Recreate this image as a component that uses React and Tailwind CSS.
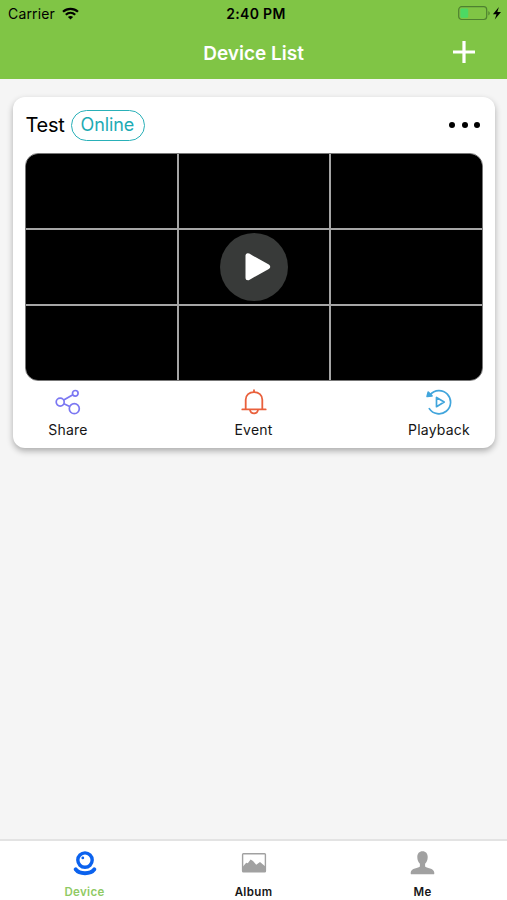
import React from "react";

function StatusBar() {
  return (
    <div className="relative flex h-7 items-center justify-between pl-[8px] pr-[5px] text-black">
      <div className="flex items-center gap-[7px]">
        <span className="text-[14px] leading-7 tracking-[0.15px]">Carrier</span>
        <svg width="17" height="13" viewBox="0 0 17 13" fill="none" stroke="#000" strokeWidth="2.2" className="-mt-[2px]">
          <path d="M1 4.8C5.2.8 11.8.8 16 4.8" />
          <path d="M3.8 7.7C6.5 5.2 10.5 5.2 13.2 7.7" />
          <path d="M8.5 12.6 5.9 9.9C7.4 8.6 9.6 8.6 11.1 9.9Z" fill="#000" stroke="none" />
        </svg>
      </div>
      <span className="absolute inset-x-0 pl-[5px] text-center text-[14px] font-semibold leading-7 tracking-[0.3px]">
        2:40 PM
      </span>
      <svg width="44" height="16" viewBox="0 0 44 16" fill="none">
        <rect x="0.7" y="0.7" width="28" height="12.8" rx="3" stroke="#4e8130" strokeWidth="1.2" />
        <rect x="2.4" y="2.5" width="7.8" height="9.2" rx="1.3" fill="#4cd964" />
        <path d="M30.4 4.9C32.2 5.7 32.2 8.5 30.4 9.4Z" fill="#4e8130" />
        <path d="M40.9 1 34.9 8.2H38.5L36.8 13.4 43 6.1H39.3Z" fill="#000" />
      </svg>
    </div>
  );
}

function ShareIcon() {
  return (
    <svg width="26" height="26" viewBox="0 0 26 26" fill="none" stroke="#7b77f2" strokeWidth="1.7">
      <circle cx="5.2" cy="13.1" r="4" />
      <circle cx="20.3" cy="4.3" r="2.8" />
      <circle cx="19.3" cy="19.7" r="5" />
      <path d="M8.7 11.1 17.9 5.7M8.9 14.7 14.7 17.4" />
    </svg>
  );
}

function BellIcon() {
  return (
    <svg width="26" height="26" viewBox="0 0 26 26" fill="none" stroke="#e9603c" strokeWidth="1.8">
      <path d="M4.7 20.3V10.8C4.7 6.1 8.3 3.1 13 3.1S21.3 6.1 21.3 10.8V20.3" />
      <path d="M1.3 20.4H24.7M13 1.2V3.2" strokeLinecap="round" />
      <path d="M9 20.8C9.4 23.2 10.9 24.3 13 24.3S16.6 23.2 17 20.8" />
    </svg>
  );
}

function PlaybackIcon() {
  return (
    <svg width="26" height="26" viewBox="0 0 26 26" fill="none" stroke="#41a5dc" strokeWidth="1.7" strokeLinejoin="round">
      <path d="M4.2 5.6A11.6 11.6 0 1 1 3.3 19.6" strokeLinecap="round" />
      <path d="M2.2 3.2 1.1 7.4 6 6.9Z" fill="#41a5dc" />
      <path d="M10.5 8.5V17.7L18.2 13.1Z" />
    </svg>
  );
}

function Action({ icon, label }) {
  return (
    <div className="flex w-[90px] flex-col items-center">
      {icon}
      <span className="mt-[5px] text-[14px] leading-5 tracking-[0.22px] text-[#151515]">{label}</span>
    </div>
  );
}

function VideoPreview() {
  return (
    <div className="relative mx-[12px] h-[228px] overflow-hidden rounded-[13px] border border-[#777] bg-black">
      <div className="grid h-full grid-cols-3 grid-rows-3 gap-[2px] bg-[#a5a5a5]">
        {Array.from({ length: 9 }, (_, i) => (
          <div key={i} className="bg-black" />
        ))}
      </div>
      <div className="absolute left-1/2 top-1/2 flex size-[68px] -translate-x-1/2 -translate-y-1/2 items-center justify-center rounded-full bg-[#383a39]">
        <svg width="68" height="68" viewBox="0 0 68 68" fill="#fff" stroke="#fff" strokeWidth="5" strokeLinejoin="round">
          <path d="M28 22.8V44.7L47.6 33.8Z" />
        </svg>
      </div>
    </div>
  );
}

function DeviceCard() {
  return (
    <section className="ml-[13px] mr-[12px] mt-[18px] h-[351px] rounded-[12px] bg-white shadow-[0_3px_6px_rgba(0,0,0,0.3)]">
      <div className="flex h-[56px] items-center justify-between pl-[12.5px] pr-[15px]">
        <div className="flex items-center gap-[7px]">
          <span className="text-[20px] leading-6 tracking-[-0.3px] text-black">Test</span>
          <span className="flex h-[31px] w-[74px] items-center justify-center rounded-full border-[1.5px] border-[#29b0b8] pr-[2px] text-[18px] leading-none tracking-[-0.1px] text-[#1dabb4]">
            Online
          </span>
        </div>
        <div className="flex gap-[6.5px]">
          <i className="size-[6px] rounded-full bg-black" />
          <i className="size-[6px] rounded-full bg-black" />
          <i className="size-[6px] rounded-full bg-black" />
        </div>
      </div>
      <VideoPreview />
      <div className="flex justify-between pl-[10px] pr-[11px] pt-[8px]">
        <Action icon={<ShareIcon />} label="Share" />
        <Action icon={<BellIcon />} label="Event" />
        <Action icon={<PlaybackIcon />} label="Playback" />
      </div>
    </section>
  );
}

function Tab({ icon, label, className }) {
  return (
    <div className="flex flex-1 flex-col items-center pt-[10px]">
      {icon}
      <span className={`mt-[6px] text-[11.5px] font-semibold leading-4 tracking-[0.35px] ${className}`}>{label}</span>
    </div>
  );
}

function TabBar() {
  return (
    <nav className="flex h-[61px] border-t-2 border-[#e3e3e3] bg-white">
      <Tab
        label="Device"
        className="text-[#8fca64]"
        icon={
          <svg width="26" height="27" viewBox="0 0 26 27" fill="none" stroke="#0b62ee">
            <circle cx="13" cy="9.1" r="7.2" strokeWidth="3.4" />
            <circle cx="10.8" cy="6.9" r="1.4" fill="#0b62ee" stroke="none" />
            <path d="M3.7 18.4C7.4 23.5 18.6 23.5 22.3 18.4" strokeWidth="4" strokeLinecap="round" />
          </svg>
        }
      />
      <Tab
        label="Album"
        className="text-[#171717]"
        icon={
          <svg width="26" height="27" viewBox="0 0 26 27" fill="none">
            <rect x="1.6" y="2.7" width="22.8" height="18.2" rx="0.8" stroke="#a1a1a1" strokeWidth="1.4" />
            <path d="M2 15.4 5.2 11.8 6.8 12.2 9.6 8.6 12 9.9 15.2 13.7 19 10.9 24.4 15.5V21H2Z" fill="#a1a1a1" />
          </svg>
        }
      />
      <Tab
        label="Me"
        className="text-[#171717]"
        icon={
          <svg width="26" height="27" viewBox="0 0 26 27" fill="#a1a1a1">
            <path d="M12.5.3C9.2.3 7.3 2.5 7.3 6.1 7.3 9.1 8.4 11.5 9.9 12.8V15.6C9 17.1.7 17.2.7 21.8V22.4Q.7 23.3 1.6 23.3H23.4Q24.3 23.3 24.3 22.4V21.8C24.3 17.2 16 17.1 15.1 15.6V12.8C16.6 11.5 17.7 9.1 17.7 6.1 17.7 2.5 15.8.3 12.5.3Z" />
          </svg>
        }
      />
    </nav>
  );
}

export default function App() {
  return (
    <div className="flex h-[900px] w-[507px] flex-col overflow-hidden bg-[#f5f5f5] font-['Inter','Liberation_Sans',sans-serif]">
      <header className="h-[79px] shrink-0 bg-[#80c545]">
        <StatusBar />
        <div className="relative flex h-[50px] items-center justify-center">
          <h1 className="mt-[2px] text-[19px] font-semibold leading-6 text-white">Device List</h1>
          <svg className="absolute right-[32px] top-[13px]" width="22" height="22" viewBox="0 0 22 22" stroke="#fff" strokeWidth="3.2">
            <path d="M0 11H22M11 0V22" />
          </svg>
        </div>
      </header>
      <main className="flex-1">
        <DeviceCard />
      </main>
      <TabBar />
    </div>
  );
}
